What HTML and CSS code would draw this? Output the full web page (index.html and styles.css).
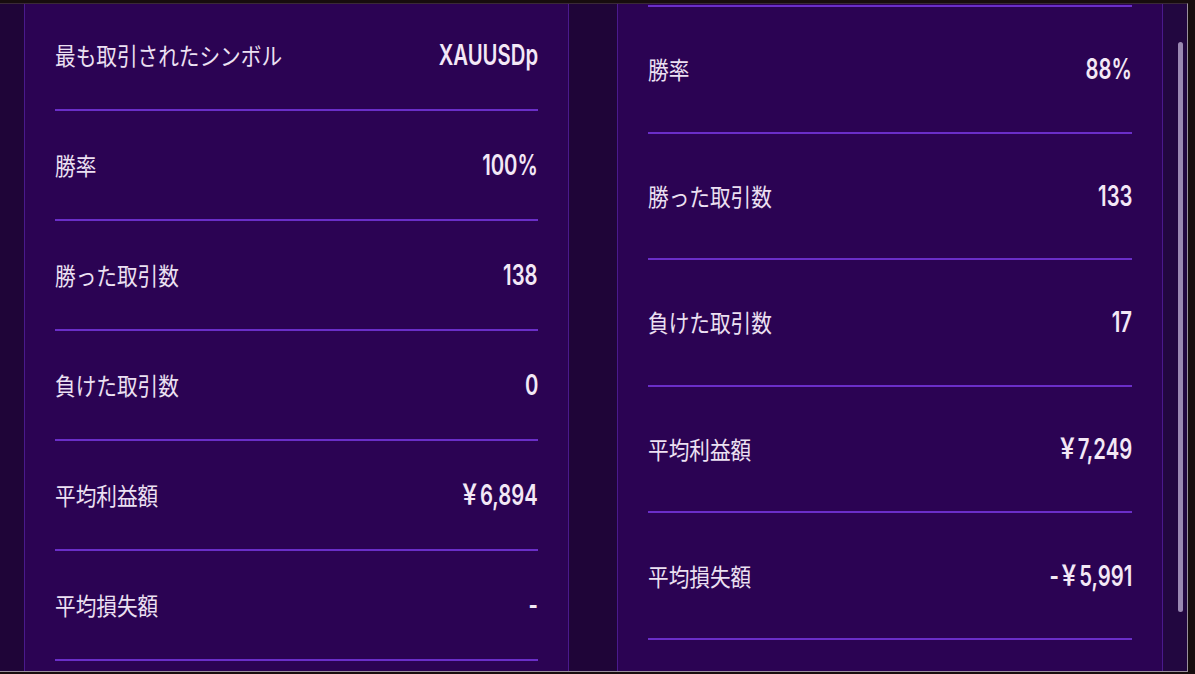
FILE: index.html
```html
<!DOCTYPE html>
<html lang="ja">
<head>
<meta charset="utf-8">
<title>Stats</title>
<link rel="stylesheet" href="styles.css">
</head>
<body>
<div class="frame">
  <div class="strip"></div>
  <section class="panel panel-a">
    <ul class="list list-a">
      <li class="row"><span class="label">最も取引されたシンボル</span><span class="value">XAUUSDp</span></li>
      <li class="row"><span class="label">勝率</span><span class="value">100%</span></li>
      <li class="row"><span class="label">勝った取引数</span><span class="value">138</span></li>
      <li class="row"><span class="label">負けた取引数</span><span class="value">0</span></li>
      <li class="row"><span class="label">平均利益額</span><span class="value">￥6,894</span></li>
      <li class="row"><span class="label">平均損失額</span><span class="value">-</span></li>
    </ul>
  </section>
  <div class="gap"></div>
  <section class="panel panel-b">
    <ul class="list list-b">
      <li class="row"><span class="label">勝率</span><span class="value">88%</span></li>
      <li class="row"><span class="label">勝った取引数</span><span class="value">133</span></li>
      <li class="row"><span class="label">負けた取引数</span><span class="value">17</span></li>
      <li class="row"><span class="label">平均利益額</span><span class="value">￥7,249</span></li>
      <li class="row"><span class="label">平均損失額</span><span class="value">-￥5,991</span></li>
    </ul>
  </section>
  <div class="track"><div class="thumb"></div></div>
</div>
</body>
</html>
```

FILE: styles.css
```css
* { box-sizing: border-box; }
html, body {
  margin: 0;
  padding: 0;
  background: #170d0e;
  width: 1195px;
  height: 674px;
  overflow: hidden;
}
.frame {
  margin-top: 3px;
  width: 1188px;
  height: 669px;
  display: flex;
  border-top: 1px solid #3a2a36;
  border-right: 1px solid #9a909c;
  border-bottom: 1px solid #9a909c;
  background: #200638;
  overflow: hidden;
}
.strip {
  width: 24px;
  flex: none;
  background: #1f0538;
}
.gap {
  width: 48px;
  flex: none;
  background: #1f0538;
}
.panel {
  flex: none;
  background: #2b0353;
  border-left: 1px solid #4a1a8c;
  border-right: 1px solid #4a1a8c;
  padding: 0 30px;
  overflow: hidden;
}
.panel-a { width: 545px; }
.panel-b { width: 546px; }
.list {
  list-style: none;
  margin: 0;
  padding: 0;
}
.list-a { margin-top: -3px; }
.list-b {
  margin-top: 1px;
  border-top: 2px solid #6a2ec8;
}
.row {
  display: flex;
  align-items: center;
  justify-content: space-between;
  border-bottom: 2px solid #6a2ec8;
}
.list-a .row { height: 110px; }
.list-b .row { height: 126.6px; }
.label {
  font-family: "Noto Sans CJK JP", "Noto Sans", sans-serif;
  font-size: 24px;
  font-weight: 400;
  color: #ece0f2;
  transform: scaleX(0.86);
  transform-origin: left center;
  white-space: nowrap;
  line-height: 1;
}
.value {
  font-family: Inter, "Noto Sans CJK JP", sans-serif;
  font-size: 28px;
  font-weight: 600;
  color: #f3e8f6;
  transform: scaleX(0.725);
  transform-origin: right center;
  white-space: nowrap;
  line-height: 1;
}
.track {
  width: 24px;
  flex: none;
  background: #220740;
  padding-top: 38px;
  padding-left: 15px;
}
.thumb {
  width: 5px;
  height: 570px;
  border-radius: 3px;
  background: #9a88b2;
}
```
